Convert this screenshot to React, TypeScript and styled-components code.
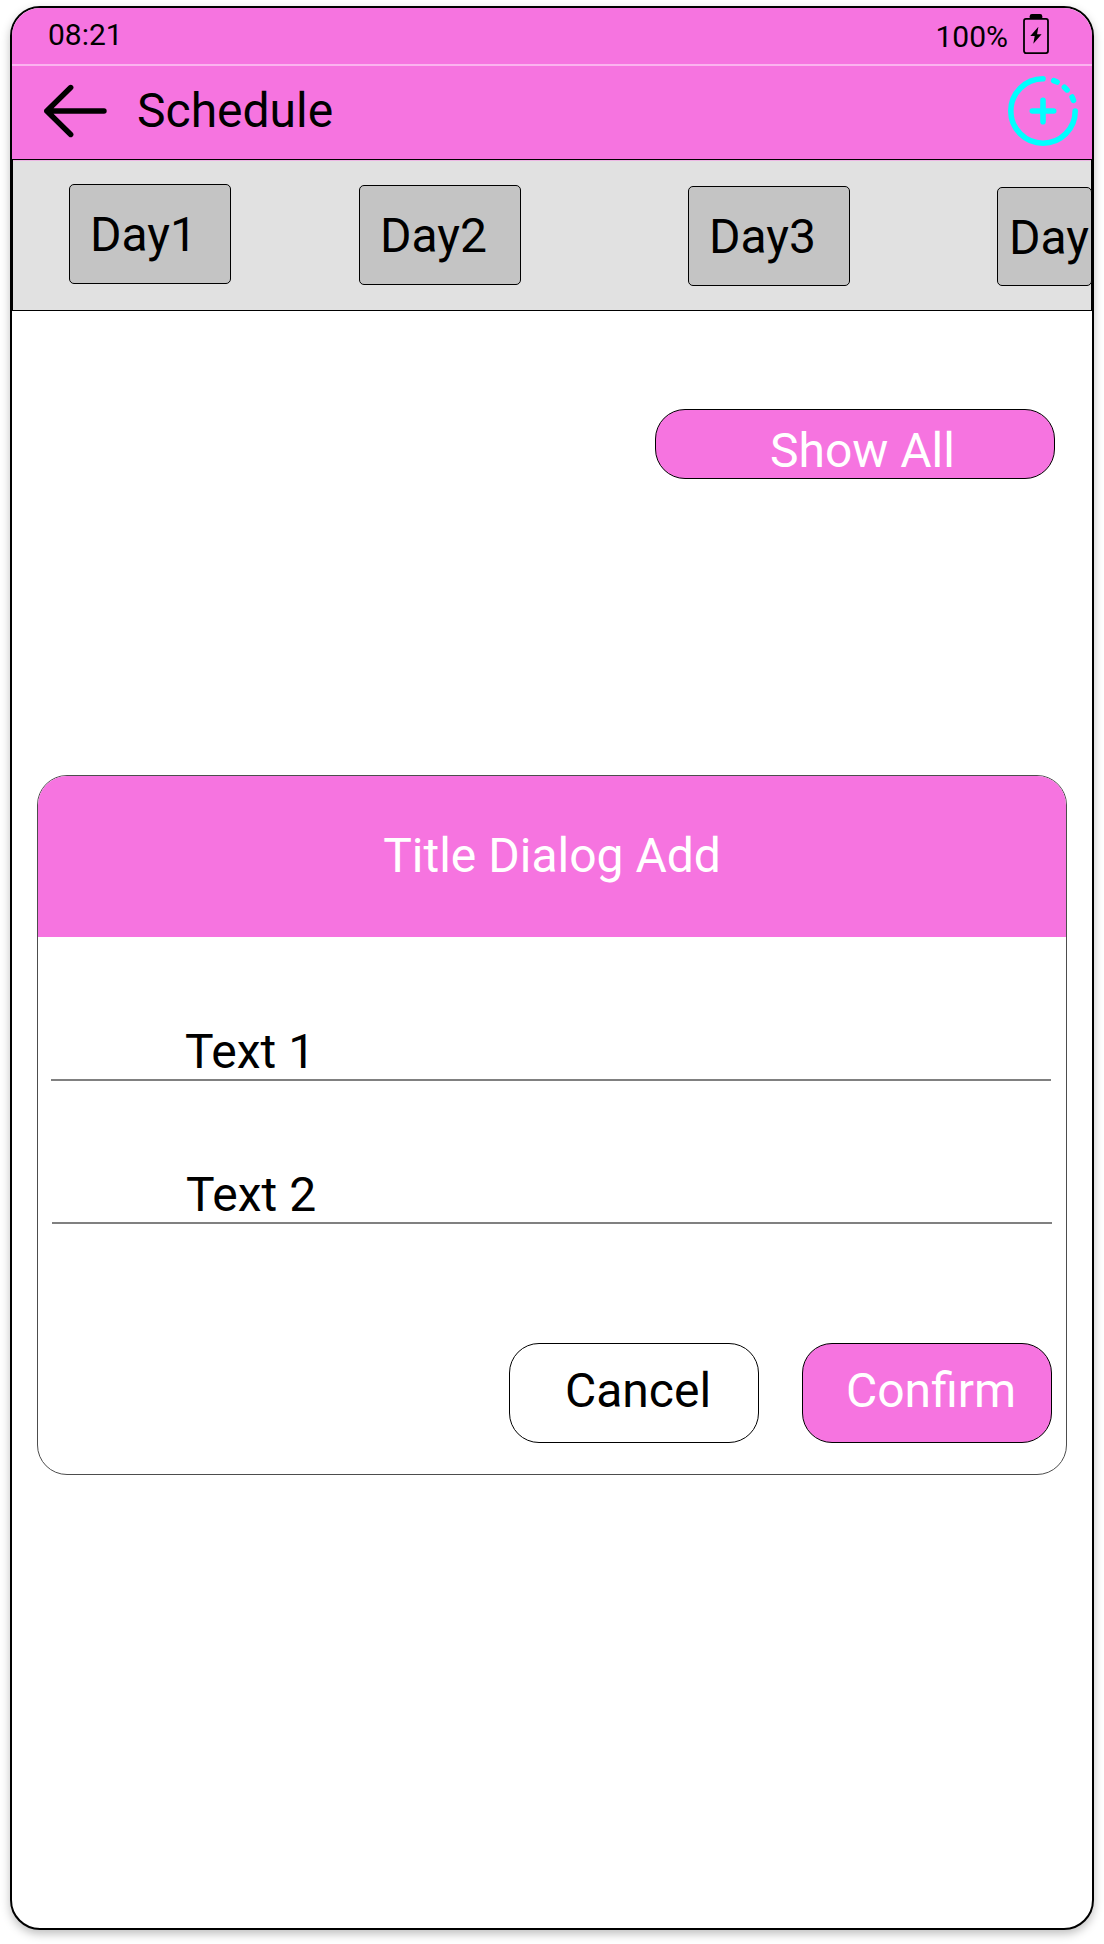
import React from "react";
import styled, { createGlobalStyle } from "styled-components";

const PINK = "#f674e0";

const GlobalStyle = createGlobalStyle`
  *, *::before, *::after { box-sizing: border-box; }
  body {
    margin: 0;
    background: #fff;
    color: #000;
    font-family: Roboto, sans-serif;
    font-size: 48px;
    line-height: 56px;
  }
  button {
    font: inherit;
    color: inherit;
    margin: 0;
    text-align: left;
  }
`;

const Page = styled.div`
  height: 1944px;
  padding: 6px 10px 14px;
  overflow: hidden;
`;

const Phone = styled.main`
  height: 1924px;
  border: 2px solid #000;
  border-radius: 30px;
  overflow: hidden;
  background: #fff;
  box-shadow: 0 4px 10px rgba(0, 0, 0, 0.25);
  display: flex;
  flex-direction: column;
`;

const StatusBar = styled.div`
  flex: none;
  height: 58px;
  padding: 2px 43px 0 36px;
  display: flex;
  justify-content: space-between;
  background: ${PINK};
  border-bottom: 2px solid #fbb3ef;
  font-size: 30px;
  line-height: 36px;
`;

const Clock = styled.span`
  padding-top: 7px;
`;

const Power = styled.div`
  display: flex;
  gap: 15px;
  padding-top: 9px;
`;

const BatteryIcon = styled.svg`
  width: 26px;
  height: 42px;
  margin-top: -6px;
`;

const AppBar = styled.header`
  flex: none;
  height: 93px;
  padding: 0 12px 3px 32px;
  display: flex;
  align-items: center;
  background: ${PINK};
`;

const IconButton = styled.button<{ $size: number }>`
  width: ${(p) => p.$size}px;
  height: ${(p) => p.$size}px;
  padding: 0;
  border: 0;
  background: none;
  svg { display: block; }
`;

const Heading = styled.h1`
  flex: 1;
  margin: 0;
  padding-left: 29px;
  font-size: 48px;
  font-weight: 400;
`;

const DayStrip = styled.nav`
  flex: none;
  height: 152px;
  padding-left: 56px;
  display: flex;
  align-items: flex-start;
  border: 1px solid #000;
  background: #e1e1e1;
  box-shadow: inset 0 1px 0 #ecb6e3;
`;

const DayButton = styled.button<{ $top: number; $gap?: number; $width?: number; $height?: number; $indent?: number; $drop?: number }>`
  flex: none;
  width: ${(p) => p.$width ?? 162}px;
  height: ${(p) => p.$height ?? 100}px;
  margin-top: ${(p) => p.$top}px;
  margin-left: ${(p) => p.$gap ?? 0}px;
  padding: ${(p) => p.$drop ?? 2}px 0 0 ${(p) => p.$indent ?? 20}px;
  border: 1px solid #000;
  border-radius: 5px;
  background: #c4c4c4;
`;

const Content = styled.section`
  flex: 1;
  display: flex;
  flex-direction: column;
  padding: 98px 25px 0;
`;

const Pill = styled.button<{ $width: number; $height: number; $indent: number; $drop?: number; $filled?: boolean }>`
  width: ${(p) => p.$width}px;
  height: ${(p) => p.$height}px;
  padding: ${(p) => p.$drop ?? 0}px 0 0 ${(p) => p.$indent}px;
  border: 1px solid #000;
  border-radius: 30px;
  background: ${(p) => (p.$filled ? PINK : "#fff")};
  color: ${(p) => (p.$filled ? "#fff" : "#000")};
  display: flex;
  align-items: flex-start;
`;

const Filter = styled.div`
  display: flex;
  justify-content: flex-end;
  padding-right: 12px;
`;

const Dialog = styled.section`
  height: 700px;
  margin-top: 296px;
  border: 1px solid #4d4d4d;
  border-radius: 30px;
  overflow: hidden;
  background: #fff;
`;

const DialogTitle = styled.h2`
  height: 161px;
  margin: 0;
  padding-top: 52px;
  background: ${PINK};
  color: #fff;
  font-size: 48px;
  font-weight: 400;
  text-align: center;
`;

const Field = styled.div<{ $top: number; $left: number }>`
  width: 1000px;
  margin-top: ${(p) => p.$top}px;
  margin-left: ${(p) => p.$left}px;
  padding-left: 134px;
  border-bottom: 2px solid #808080;
  line-height: 54px;
`;

const Actions = styled.div`
  display: flex;
  justify-content: flex-end;
  gap: 43px;
  padding: 119px 14px 0 0;
`;

export default function App() {
  return (
    <>
      <GlobalStyle />
      <Page>
        <Phone>
          <StatusBar>
            <Clock>08:21</Clock>
            <Power>
              <span>100%</span>
              <BatteryIcon viewBox="0 0 26 42">
                <path d="M6.700 6V3.200Q6.700 1 8.900 1h8.200q2.200 0 2.200 2.200V6z" />
                <rect x="1" y="5.900" width="24" height="34.200" rx="2" fill="none" stroke="#000" strokeWidth="1.800" />
                <path d="M15.400 13.700 7.300 23h4.400l-1.400 7.800L18.600 21.300h-4.500z" />
              </BatteryIcon>
            </Power>
          </StatusBar>
          <AppBar>
            <IconButton $size={64} aria-label="Back">
              <svg width="64" height="64" viewBox="0 0 64 64" fill="none" stroke="#000" strokeWidth="5.400" strokeLinecap="round" strokeLinejoin="round">
                <path d="M60 32H2.800M26.700 8.500 2.800 32l23.900 23.500" />
              </svg>
            </IconButton>
            <Heading>Schedule</Heading>
            <IconButton $size={74} aria-label="Add">
              <svg width="74" height="74" viewBox="0 0 74 74" fill="none" stroke="#00ffff" strokeWidth="5.600" strokeLinecap="round">
                <path d="M37 4.800A32.200 32.200 0 1 0 69.200 37M37 26.300v21.400M26.300 37h21.400" />
                <path d="M47.700 6.600l3.400 1.400M58.400 13.200l2.700 2.700M66.100 23l1.400 3.400" />
              </svg>
            </IconButton>
          </AppBar>
          <DayStrip>
            <DayButton $top={24}>Day1</DayButton>
            <DayButton $top={25} $gap={128}>Day2</DayButton>
            <DayButton $top={26} $gap={167}>Day3</DayButton>
            <DayButton $top={27} $gap={147} $width={95} $height={99} $indent={11} $drop={3}>Day</DayButton>
          </DayStrip>
          <Content>
            <Filter>
              <Pill $width={400} $height={70} $indent={114} $drop={13} $filled>Show All</Pill>
            </Filter>
            <Dialog>
              <DialogTitle>Title Dialog Add</DialogTitle>
              <Field $top={88} $left={13}>Text 1</Field>
              <Field $top={87} $left={14}>Text 2</Field>
              <Actions>
                <Pill $width={250} $height={100} $indent={55} $drop={19}>Cancel</Pill>
                <Pill $width={250} $height={100} $indent={43} $drop={19} $filled>Confirm</Pill>
              </Actions>
            </Dialog>
          </Content>
        </Phone>
      </Page>
    </>
  );
}
